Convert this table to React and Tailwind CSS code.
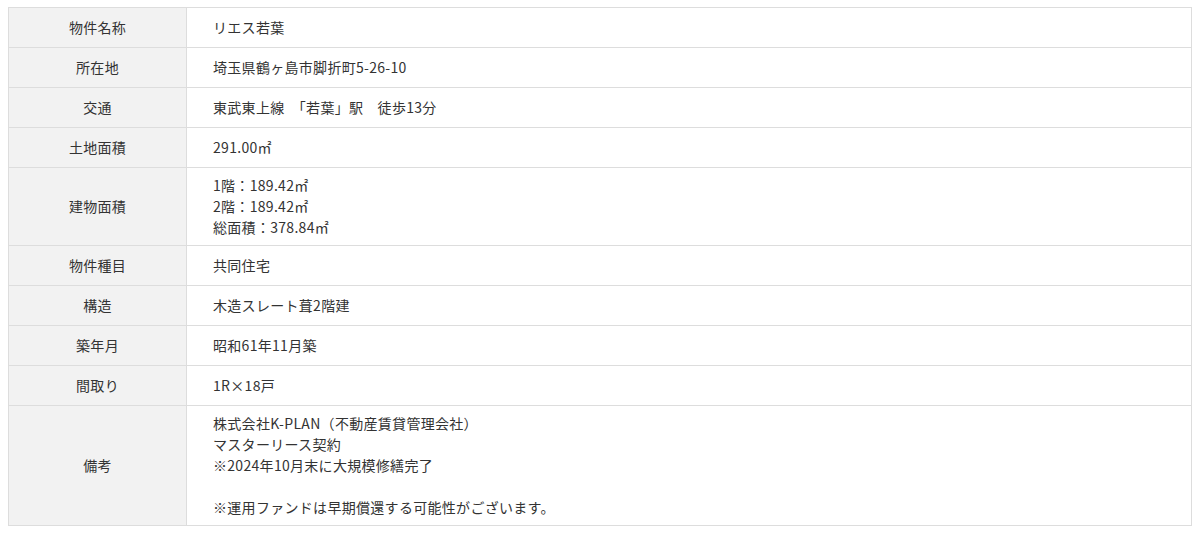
const rows = [
  { label: '物件名称', value: ['リエス若葉'] },
  { label: '所在地', value: ['埼玉県鶴ヶ島市脚折町5-26-10'] },
  { label: '交通', value: ['東武東上線\u3000「若葉」駅\u3000徒歩13分'] },
  { label: '土地面積', value: ['291.00㎡'] },
  { label: '建物面積', value: ['1階：189.42㎡', '2階：189.42㎡', '総面積：378.84㎡'] },
  { label: '物件種目', value: ['共同住宅'] },
  { label: '構造', value: ['木造スレート葺2階建'] },
  { label: '築年月', value: ['昭和61年11月築'] },
  { label: '間取り', value: ['1R×18戸'] },
  {
    label: '備考',
    value: [
      '株式会社K-PLAN（不動産賃貸管理会社）',
      'マスターリース契約',
      '※2024年10月末に大規模修繕完了',
      '',
      '※運用ファンドは早期償還する可能性がございます。',
    ],
  },
];

export default function App() {
  return (
    <div className="w-[1200px] h-[533px] bg-white pt-[7px] pl-[8px] font-['Noto_Sans_CJK_JP','Noto_Sans',sans-serif] text-[14px] leading-[21px] tracking-[0.3px] text-[#333]">
      <table className="w-[1184px] border-collapse border border-[#ddd]">
        <tbody>
          {rows.map((row) => (
            <tr key={row.label} className="h-[40px]">
              <th className="w-[178px] border border-[#ddd] bg-[#f2f2f2] py-[7px] text-center align-middle font-normal">
                {row.label}
              </th>
              <td className="border border-[#ddd] py-[7px] pl-[26px] pr-4 text-left align-middle">
                {row.value.map((line, i) => (
                  <div key={i} className="h-[21px]">
                    {line}
                  </div>
                ))}
              </td>
            </tr>
          ))}
        </tbody>
      </table>
    </div>
  );
}
